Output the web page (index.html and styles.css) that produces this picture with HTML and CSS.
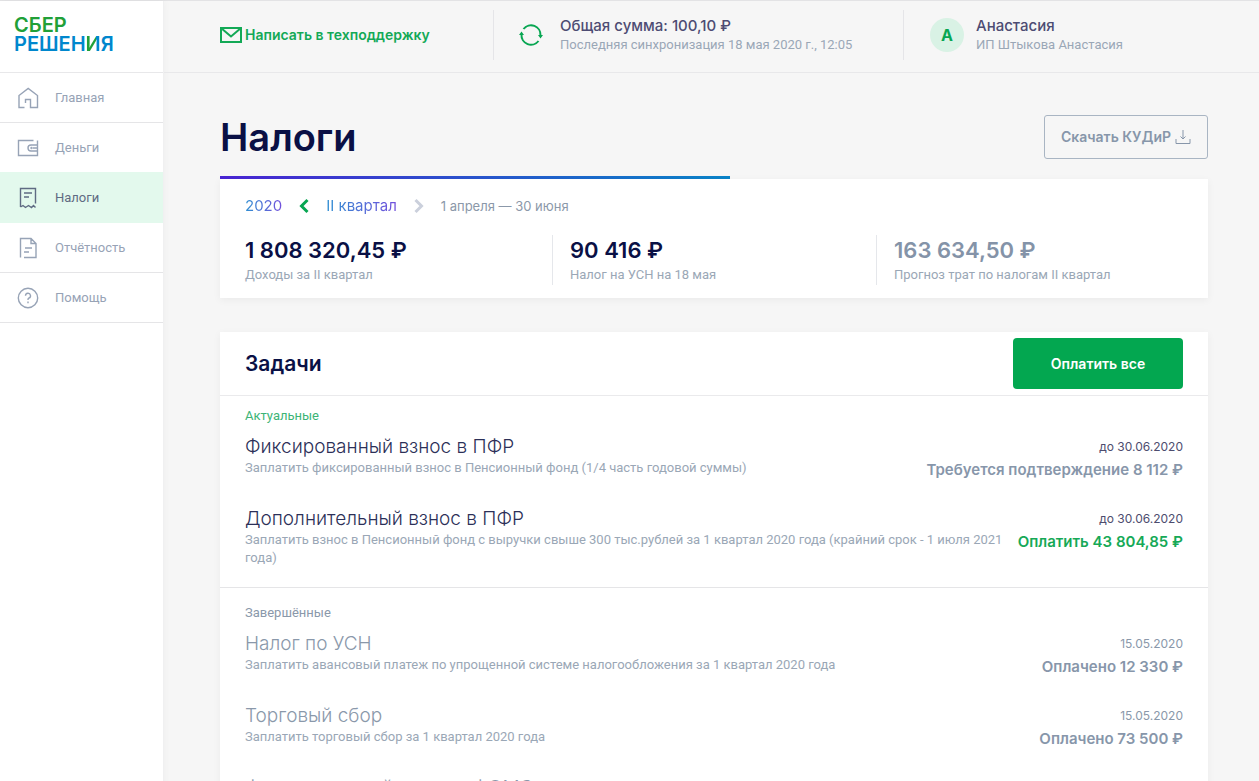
FILE: index.html
```html
<!DOCTYPE html>
<html lang="ru">
<head>
<meta charset="utf-8">
<meta name="viewport" content="width=device-width, initial-scale=1">
<title>Налоги</title>
<link rel="stylesheet" href="styles.css">
</head>
<body>
<div class="app">
  <aside class="sidebar">
    <a class="logo" href="#" aria-label="Сбер Решения">
      <span class="logo-top">СБЕР</span>
      <span class="logo-bottom">РЕШЕН<span class="logo-accent">И</span>Я</span>
    </a>
    <nav class="nav">
      <a class="nav-item" href="#">
        <svg class="nav-icon" viewBox="0 0 24 24"><path d="M8.500 21.500H3V9.500L12.200 2.500L21.500 9.500V21.500H14.500V13.500H9.500V17"/></svg>
        <span>Главная</span>
      </a>
      <a class="nav-item" href="#">
        <svg class="nav-icon" viewBox="0 0 24 24"><path d="M17.500 4.500H2.500V19.500H21.500V4.500M21.500 9H15A3 3 0 0 0 15 15H21.500M21.500 12H17"/><circle cx="15.500" cy="12" r="0.500"/></svg>
        <span>Деньги</span>
      </a>
      <a class="nav-item nav-item-active" href="#">
        <svg class="nav-icon" viewBox="0 0 24 24"><path d="M4.500 21V2.500H19.500V17.500M4.500 21L7 19.500L9.500 21.500L12.500 19.500L15.500 21.500L17.500 19.500L19.500 21.500M8 7H16M8 11H13"/></svg>
        <span>Налоги</span>
      </a>
      <a class="nav-item" href="#">
        <svg class="nav-icon" viewBox="0 0 24 24"><path d="M4.500 21.500V2.500H15L20 7.500V21.500H8M15 2.500V7.500H20M9 12H16M8 16H13"/></svg>
        <span>Отчётность</span>
      </a>
      <a class="nav-item" href="#">
        <svg class="nav-icon" viewBox="0 0 24 24"><circle cx="12" cy="12" r="9.700"/><path d="M9.500 9.800A2.500 2.500 0 1 1 12.700 12.200Q12 12.500 12 14M12 15.500V17.200"/></svg>
        <span>Помощь</span>
      </a>
    </nav>
  </aside>

  <div class="page">
    <header class="topbar">
      <div class="topbar-cell">
        <a class="support" href="#">
          <svg class="support-icon" viewBox="0 0 22 16"><path d="M1 1H21V15H1ZM1 1L11 9.500L21 1"/></svg>
          <span>Написать в техподдержку</span>
        </a>
      </div>
      <div class="topbar-cell topbar-sync">
        <svg class="sync-icon" viewBox="0 0 24 24"><path d="M4.500 6A9.500 9.500 0 0 1 21.500 12.500M19.500 18A9.500 9.500 0 0 1 2.500 11.500"/><path class="sync-head" d="M19 12H24L21.500 15.500ZM0 12H5L2.500 8.500Z"/></svg>
        <div>
          <div class="topbar-title">Общая сумма: 100,10 ₽</div>
          <div class="topbar-note">Последняя синхронизация 18 мая 2020 г., 12:05</div>
        </div>
      </div>
      <div class="topbar-cell topbar-user">
        <span class="avatar">А</span>
        <div>
          <div class="topbar-title">Анастасия</div>
          <div class="topbar-note">ИП Штыкова Анастасия</div>
        </div>
      </div>
    </header>

    <main class="content">
      <div class="heading">
        <h1>Налоги</h1>
        <button class="btn-outline" type="button">
          <span>Скачать КУДиР</span>
          <svg class="download-icon" viewBox="0 0 16 16"><path d="M8 1V10M5.500 7.500L8 10L10.500 7.500M1 10V14.500H15V10"/></svg>
        </button>
      </div>

      <div class="progress"></div>
      <section class="summary">
        <div class="period">
          <a class="period-link" href="#">2020</a>
          <button class="arrow" type="button" aria-label="Предыдущий квартал"><svg viewBox="0 0 12 16"><path d="M9.500 2L3.500 8L9.500 14"/></svg></button>
          <a class="period-link" href="#">II квартал</a>
          <button class="arrow arrow-off" type="button" aria-label="Следующий квартал"><svg viewBox="0 0 12 16"><path d="M2.500 2L8.500 8L2.500 14"/></svg></button>
          <span class="period-range">1 апреля — 30 июня</span>
        </div>
        <div class="stats">
          <div class="stat">
            <div class="stat-value">1 808 320,45 ₽</div>
            <div class="stat-note">Доходы за II квартал</div>
          </div>
          <div class="stat">
            <div class="stat-value">90 416 ₽</div>
            <div class="stat-note">Налог на УСН на 18 мая</div>
          </div>
          <div class="stat">
            <div class="stat-value stat-muted">163 634,50 ₽</div>
            <div class="stat-note">Прогноз трат по налогам II квартал</div>
          </div>
        </div>
      </section>

      <section class="tasks">
        <div class="tasks-head">
          <h2>Задачи</h2>
          <button class="btn-primary" type="button">Оплатить все</button>
        </div>
        <div class="group">
          <h3 class="group-title">Актуальные</h3>
          <div class="task">
            <div class="task-main">
              <div class="task-title">Фиксированный взнос в ПФР</div>
              <div class="task-note">Заплатить фиксированный взнос в Пенсионный фонд (1/4 часть годовой суммы)</div>
            </div>
            <div class="task-side">
              <div class="task-date">до 30.06.2020</div>
              <div class="task-sum">Требуется подтверждение 8 112 ₽</div>
            </div>
          </div>
          <div class="task">
            <div class="task-main">
              <div class="task-title">Дополнительный взнос в ПФР</div>
              <div class="task-note">Заплатить взнос в Пенсионный фонд с выручки свыше 300 тыс.рублей за 1 квартал 2020 года (крайний срок - 1 июля 2021 года)</div>
            </div>
            <div class="task-side">
              <div class="task-date">до 30.06.2020</div>
              <a class="task-sum task-pay" href="#">Оплатить 43 804,85 ₽</a>
            </div>
          </div>
        </div>
        <div class="group group-done">
          <h3 class="group-title">Завершённые</h3>
          <div class="task">
            <div class="task-main">
              <div class="task-title">Налог по УСН</div>
              <div class="task-note">Заплатить авансовый платеж по упрощенной системе налогообложения за 1 квартал 2020 года</div>
            </div>
            <div class="task-side">
              <div class="task-date">15.05.2020</div>
              <div class="task-sum">Оплачено 12 330 ₽</div>
            </div>
          </div>
          <div class="task">
            <div class="task-main">
              <div class="task-title">Торговый сбор</div>
              <div class="task-note">Заплатить торговый сбор за 1 квартал 2020 года</div>
            </div>
            <div class="task-side">
              <div class="task-date">15.05.2020</div>
              <div class="task-sum">Оплачено 73 500 ₽</div>
            </div>
          </div>
          <div class="task">
            <div class="task-main">
              <div class="task-title">Фиксированный взнос в ФОМС</div>
            </div>
          </div>
        </div>
      </section>
    </main>
  </div>
</div>
</body>
</html>
```

FILE: styles.css
```css
* { box-sizing: border-box; }

body {
  margin: 0;
  background: #f6f6f6;
  color: #0a1045;
  font-family: Inter, "Noto Sans", sans-serif;
  font-size: 13px;
  line-height: 18px;
}

a { color: inherit; text-decoration: none; }
button { font: inherit; cursor: pointer; }
h1, h2, h3 { margin: 0; }
svg { flex: none; fill: none; stroke: currentColor; }

.app {
  display: flex;
  min-height: 100vh;
  border-top: 1px solid #e3e3e5;
}

.sidebar {
  flex: 0 0 164px;
  background: #fff;
  border-right: 1px solid #f0f0f1;
  box-shadow: 0 0 8px rgba(0, 0, 0, 0.04);
}

.logo {
  display: flex;
  flex-direction: column;
  height: 72px;
  padding: 15px 14px 0;
  border-bottom: 1px solid #e8e8ea;
  font-size: 20px;
  font-weight: 600;
  line-height: 19px;
}
.logo-top { color: #21a038; }
.logo-bottom { color: #0087cd; }
.logo-accent {
  background: linear-gradient(90deg, #21a038 70%, #0087cd 70%);
  background-clip: text;
  -webkit-background-clip: text;
  color: transparent;
}

.nav-item {
  display: flex;
  align-items: center;
  gap: 15px;
  height: 50px;
  padding-left: 16px;
  border-bottom: 1px solid #e5e5e7;
  color: #97a3b6;
}
.nav-item:nth-child(2) { border-bottom-color: #e3f9ed; }
.nav-item-active {
  background: #e3f9ed;
  border-bottom-color: #e3f9ed;
  color: #5f6b83;
}
.nav-icon { width: 24px; height: 24px; stroke-width: 1.4; }

.page { flex: 1; min-width: 0; }

.topbar {
  display: grid;
  grid-template-columns: 273fr 410fr 356fr;
  align-items: start;
  height: 72px;
  padding: 9px 0 0 56px;
  border-bottom: 1px solid #e8e8ea;
}
.topbar-cell { display: flex; align-items: center; height: 50px; }
.topbar-sync { gap: 17px; padding-left: 25px; border-left: 1px solid #e5e5e8; }
.topbar-user { gap: 12px; padding-left: 26px; border-left: 1px solid #e5e5e8; }
.topbar-title { color: #4d4c73; font-size: 15px; font-weight: 500; line-height: 20px; }
.nav-item, .topbar-note, .stat-note, .task-note, .group-title {
  font-family: Roboto, "Noto Sans", sans-serif;
}
.topbar-note, .stat-note, .task-note { color: #9aa7b6; }
.support {
  display: flex;
  align-items: center;
  gap: 3px;
  color: #13a956;
  font-size: 14px;
  font-weight: 600;
}
.support-icon { width: 22px; height: 16px; stroke-width: 2; }
.sync-icon { width: 24px; height: 24px; color: #08a652; stroke-width: 2; }
.sync-head { fill: currentColor; stroke: none; }
.avatar {
  display: grid;
  place-items: center;
  width: 34px;
  height: 34px;
  border-radius: 50%;
  background: #d9f2e5;
  color: #08a652;
  font-size: 16px;
  font-weight: 700;
}

.content { padding: 42px 51px 40px 56px; }

.heading {
  display: flex;
  align-items: center;
  justify-content: space-between;
  margin-bottom: 17px;
}
h1 { font-size: 38px; font-weight: 600; line-height: 44px; }
.btn-outline {
  display: flex;
  align-items: center;
  justify-content: center;
  gap: 4px;
  min-width: 164px;
  height: 44px;
  border: 1px solid #a9b5c3;
  border-radius: 3px;
  background: transparent;
  color: #8796aa;
  font-size: 14px;
  font-weight: 600;
}
.download-icon { width: 16px; height: 16px; }

.progress {
  width: 51.6%;
  height: 3px;
  background: linear-gradient(90deg, #4a25d4, #0a84c8);
}

.summary, .tasks {
  background: #fff;
  box-shadow: 0 2px 8px rgba(0, 0, 0, 0.05);
}
.summary { padding: 17px 8px 13px; }
.period {
  display: flex;
  align-items: center;
  padding-left: 17px;
  margin-bottom: 19px;
  line-height: 20px;
}
.period-link {
  background: linear-gradient(90deg, #2f8fd2, #7350dc);
  background-clip: text;
  -webkit-background-clip: text;
  color: transparent;
  font-size: 15px;
}
.arrow {
  display: grid;
  place-items: center;
  width: 44px;
  height: 20px;
  padding: 0;
  border: 0;
  background: none;
  color: #08a652;
}
.arrow svg { width: 12px; height: 16px; stroke-width: 3; }
.arrow-off { color: #cbd0dc; }
.period-range { color: #8b98a9; }

.stats { display: grid; grid-template-columns: repeat(3, 1fr); }
.stat { height: 50px; padding: 1px 0 0 17px; }
.stat + .stat { border-left: 1px solid #e5e7eb; }
.stat-value { font-size: 22px; font-weight: 600; line-height: 28px; margin-bottom: 2px; }
.stat-muted { color: #8493a8; }

.tasks { margin-top: 34px; }
.tasks-head {
  display: flex;
  align-items: center;
  justify-content: space-between;
  height: 64px;
  padding: 0 25px;
  border-bottom: 1px solid #eaeaec;
}
h2 { font-size: 21px; font-weight: 600; line-height: 28px; }
.btn-primary {
  width: 170px;
  height: 51px;
  border: 0;
  border-radius: 4px;
  background: #03a750;
  color: #fff;
  font-size: 14px;
  font-weight: 600;
}

.group { padding: 11px 25px 20px; }
.group-title { margin-bottom: 10px; color: #3cb476; font-size: 13px; font-weight: 400; line-height: 18px; }
.task { display: flex; justify-content: space-between; gap: 10px; }
.task + .task { margin-top: 30px; }
.task-main { flex: 1; min-width: 0; }
.task-title { color: #2c3058; font-size: 19px; font-weight: 300; line-height: 24px; }
.task-side { flex: none; text-align: right; }
.task-date { color: #4d4c6e; font-size: 12px; line-height: 24px; }
.task-sum { display: block; color: #8796aa; font-size: 15px; font-weight: 600; line-height: 22px; margin-bottom: -4px; }
.task-pay { color: #16a957; }

.group-done { padding-top: 16px; border-top: 1px solid #e5e5e7; }
.group-done .group-title, .group-done .task-title, .group-done .task-date { color: #8a98aa; }
```
